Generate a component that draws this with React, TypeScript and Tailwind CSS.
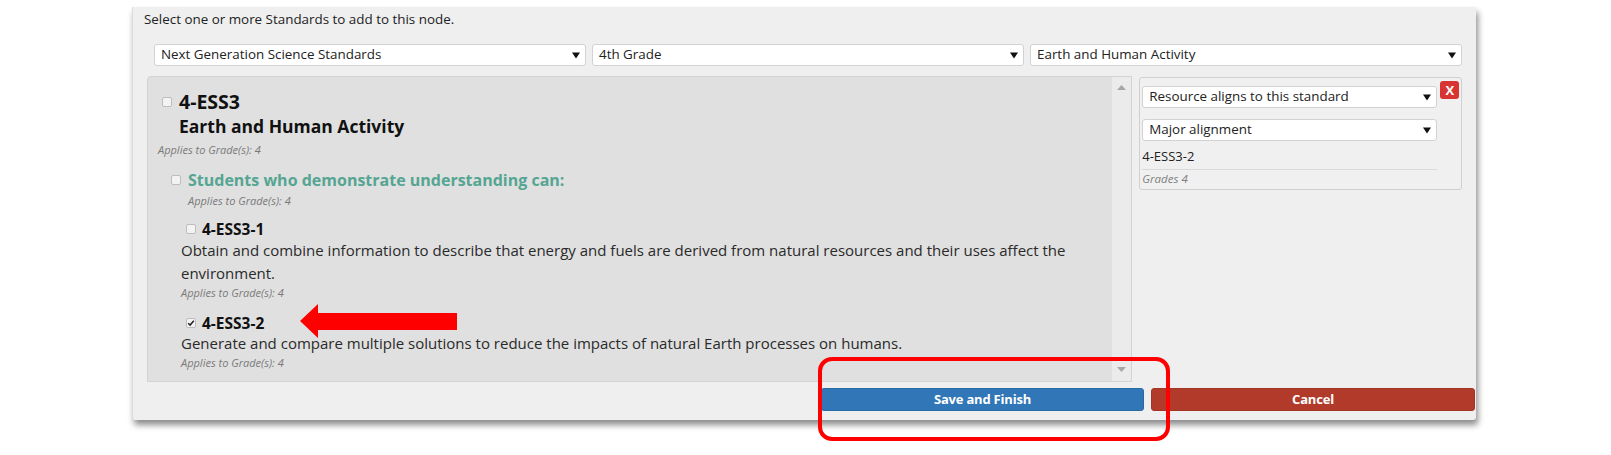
import React from 'react'

function Caret() {
  return (
    <svg width="8" height="7" viewBox="0 0 8 7" className="shrink-0">
      <path d="M0 0.5h8L4 6.5z" fill="#111" />
    </svg>
  )
}

function Dropdown({ label, className = '' }: { label: string; className?: string }) {
  return (
    <div
      className={`h-[22px] bg-white border border-[#d2d2d2] rounded-[3px] flex items-center justify-between pl-[6px] pr-[5px] text-[13.4px] text-[#222] ${className}`}
    >
      <span className="leading-none">{label}</span>
      <Caret />
    </div>
  )
}

function Box({ checked = false }: { checked?: boolean }) {
  return (
    <span className="w-[10px] h-[10px] shrink-0 rounded-[2px] border border-[#bdbdbd] bg-[#f3f3f3] flex items-center justify-center">
      {checked && (
        <svg width="8" height="8" viewBox="0 0 8 8">
          <path d="M1.2 4.2l1.9 1.9L6.8 1.8" stroke="#222" strokeWidth="1.5" fill="none" />
        </svg>
      )}
    </span>
  )
}

function Applies({ className = '' }: { className?: string }) {
  return <div className={`text-[11px] leading-[16px] italic text-[#7a7a7a] ${className}`}>Applies to Grade(s): 4</div>
}

export default function App() {
  return (
    <div className="relative w-[1611px] h-[455px] bg-white overflow-hidden font-['Open_Sans',sans-serif]">
      {/* modal card */}
      <div className="ml-[132px] mt-[7px] w-[1344px] h-[413px] bg-[#efefef] border-l border-[#dcdcdc] rounded-b-[3px] shadow-[2px_5px_6px_rgba(0,0,0,0.45)] flex flex-col">
        <p className="ml-[11px] mt-[3px] text-[13.4px] leading-[18px] text-[#222]">
          Select one or more Standards to add to this node.
        </p>

        <div className="ml-[21px] mr-[14px] mt-[16px] flex gap-[6px]">
          <Dropdown className="flex-1" label="Next Generation Science Standards" />
          <Dropdown className="flex-1" label="4th Grade" />
          <Dropdown className="flex-1" label="Earth and Human Activity" />
        </div>

        <div className="ml-[14px] mr-[14px] mt-[10px] flex gap-[7px] items-start">
          {/* standards tree */}
          <div className="w-[986px] h-[306px] flex bg-[#e0e0e0] border border-[#d3d3d3] rounded-tl-[4px] overflow-hidden">
            <div className="flex-1 pl-[10px] pt-[13px] pr-[12px] text-[#222]">
              <div className="flex items-center gap-[7px] pl-[4px]">
                <Box />
                <span className="text-[19.5px] leading-[24px] font-bold text-[#111]">4-ESS3</span>
              </div>
              <div className="pl-[21px] text-[17.5px] leading-[25px] font-bold text-[#111]">Earth and Human Activity</div>
              <Applies className="mt-[3px]" />

              <div className="mt-[11px] pl-[13px]">
                <div className="flex items-center gap-[7px]">
                  <Box />
                  <span className="text-[16px] leading-[22px] font-bold text-[#55a593]">
                    Students who demonstrate understanding can:
                  </span>
                </div>
                <Applies className="pl-[17px] mt-[2px]" />
              </div>

              <div className="mt-[11px] pl-[23px]">
                <div className="flex items-center gap-[6px] pl-[5px]">
                  <Box />
                  <span className="text-[15.5px] leading-[18px] font-bold text-[#111]">4-ESS3-1</span>
                </div>
                <p className="text-[15px] leading-[23px] text-[#2a2a2a] mt-[0.5px]">
                  Obtain and combine information to describe that energy and fuels are derived from natural resources and
                  their uses affect the environment.
                </p>
                <Applies />

                <div className="flex items-center gap-[6px] pl-[5px] mt-[13px]">
                  <Box checked />
                  <span className="text-[15.5px] leading-[18px] font-bold text-[#111]">4-ESS3-2</span>
                </div>
                <p className="text-[15px] leading-[23px] text-[#2a2a2a]">
                  Generate and compare multiple solutions to reduce the impacts of natural Earth processes on humans.
                </p>
                <Applies />
              </div>
            </div>

            {/* scrollbar */}
            <div className="w-[19px] bg-[#ebebeb] flex flex-col items-center justify-between pt-[8px] pb-[9px]">
              <svg width="9" height="5" viewBox="0 0 9 5">
                <path d="M0 5h9L4.5 0z" fill="#a6a6a6" />
              </svg>
              <svg width="9" height="5" viewBox="0 0 9 5">
                <path d="M0 0h9L4.5 5z" fill="#a6a6a6" />
              </svg>
            </div>
          </div>

          {/* alignment box */}
          <div className="relative mt-[1px] w-[323px] h-[113px] border border-[#d0d0d0] rounded-[3px] bg-[#f0f0f0] pl-[2px] pr-[24px] pt-[8px]">
            <Dropdown label="Resource aligns to this standard" />
            <Dropdown label="Major alignment" className="mt-[11px]" />
            <div className="mt-[5px] text-[13px] leading-[20px] text-[#222]">4-ESS3-2</div>
            <div className="border-t border-[#d9d9d9] mt-[3px] pt-[1px] text-[11.5px] leading-[16px] italic text-[#808080]">
              Grades 4
            </div>
            <div className="absolute left-[300px] top-[3px] w-[19px] h-[18px] rounded-[3px] bg-[#d83431] text-white text-[13px] font-bold leading-[18px] text-center">
              X
            </div>
          </div>
        </div>

        <div className="ml-[688px] mt-[6px] flex gap-[7px]">
          <button className="w-[323px] h-[23px] rounded-[3px] bg-[#3176b6] border border-[#2a6aa5] text-white text-[13px] font-bold tracking-[-0.2px]">
            Save and Finish
          </button>
          <button className="w-[324px] h-[23px] rounded-[3px] bg-[#b23a2b] border border-[#a33526] text-white text-[13px] font-bold tracking-[-0.2px]">
            Cancel
          </button>
        </div>
      </div>

      {/* annotations */}
      <svg className="absolute left-0 top-0 pointer-events-none" width="1611" height="455">
        <polygon points="300,321 318,304 318,313 457,313 457,330 318,330 318,338" fill="#ff0000" />
      </svg>
      <div className="absolute left-[818px] top-[357px] w-[352px] h-[84px] border-[4px] border-[#ff0000] rounded-[14px] pointer-events-none" />
    </div>
  )
}
